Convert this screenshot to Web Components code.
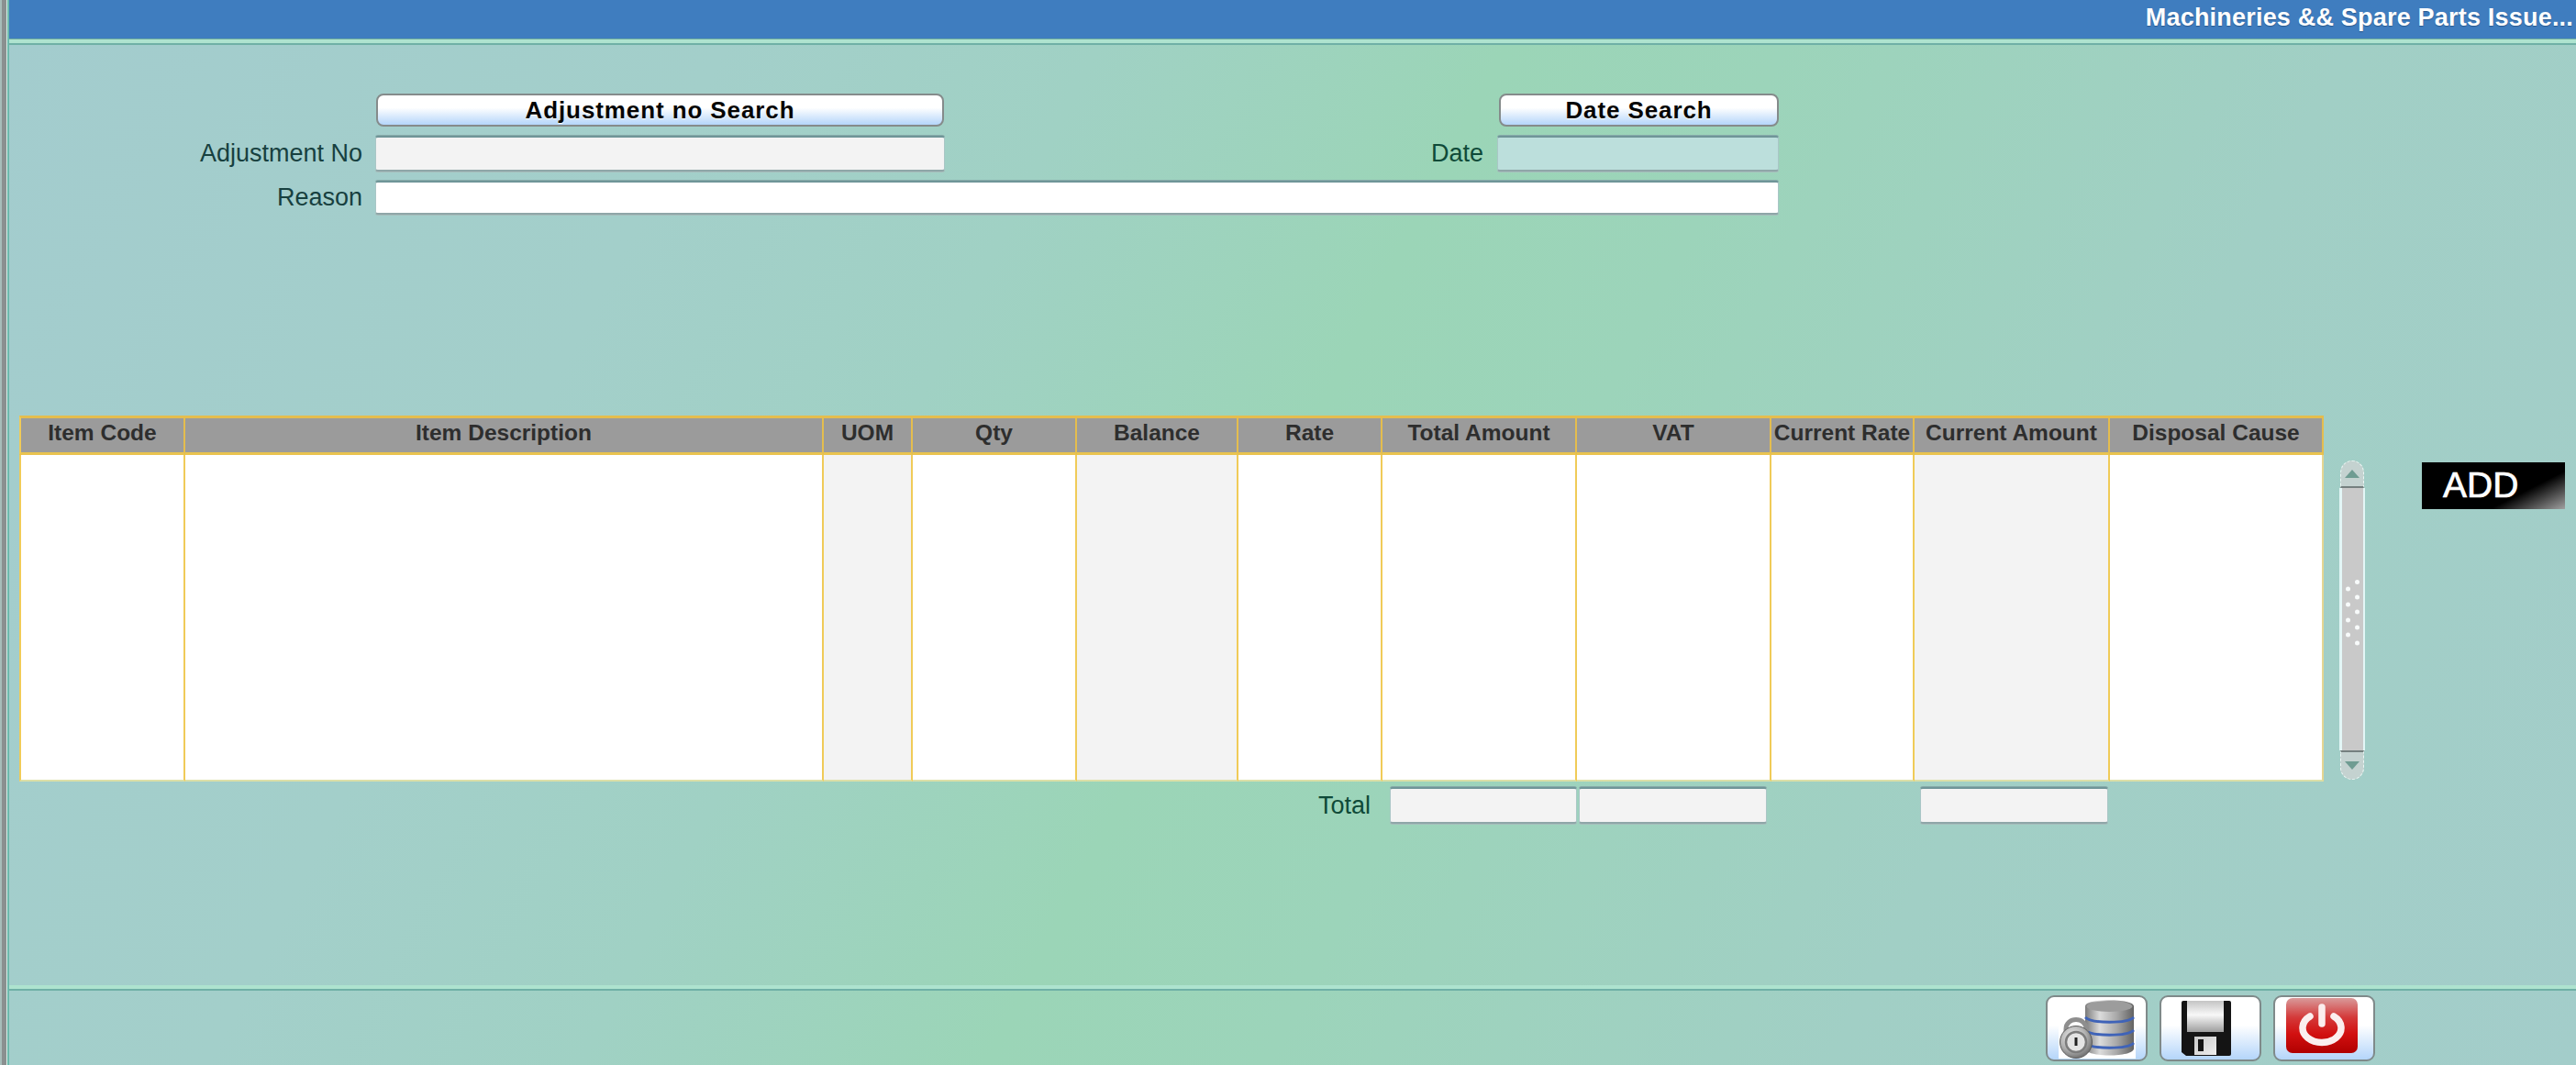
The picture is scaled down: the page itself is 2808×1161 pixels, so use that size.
<!DOCTYPE html>
<html>
<head>
<meta charset="utf-8">
<title>Machineries && Spare Parts Issue</title>
<style>
    html, body { margin: 0; padding: 0; height: 100%; overflow: hidden; }
    body { font-family: "Liberation Sans", Arial, sans-serif; }
</style>
</head>
<body>
<app-window>
    <title-bar slot="title">Machineries &amp;&amp; Spare Parts Issue...</title-bar>

    <search-form>
        <field-label slot="adj-label">Adjustment No</field-label>
        <search-button slot="adj-button">Adjustment no Search</search-button>
        <text-box slot="adj-box" kind="readonly"></text-box>
        <search-button slot="date-button">Date Search</search-button>
        <field-label slot="date-label" style="color:#0f4a38">Date</field-label>
        <text-box slot="date-box" kind="tint"></text-box>
        <field-label slot="reason-label">Reason</field-label>
        <text-box slot="reason-box"></text-box>
    </search-form>

    <grid-area>
        <data-grid slot="grid">
            <grid-col w="181">Item Code</grid-col>
            <grid-col w="696">Item Description</grid-col>
            <grid-col w="97" shaded>UOM</grid-col>
            <grid-col w="179">Qty</grid-col>
            <grid-col w="176" shaded>Balance</grid-col>
            <grid-col w="157">Rate</grid-col>
            <grid-col w="212">Total Amount</grid-col>
            <grid-col w="212">VAT</grid-col>
            <grid-col w="156">Current Rate</grid-col>
            <grid-col w="213" shaded>Current Amount</grid-col>
            <grid-col w="233" last>Disposal Cause</grid-col>
        </data-grid>
        <scroll-bar slot="scroll"></scroll-bar>
        <add-button slot="add">ADD</add-button>
    </grid-area>

    <total-row></total-row>

    <tool-bar slot="footer">
        <icon-button icon="db"></icon-button>
        <icon-button icon="save"></icon-button>
        <icon-button icon="power"></icon-button>
    </tool-bar>
</app-window>

<script>
class AppWindow extends HTMLElement {
    connectedCallback() {
        const shadow = this.attachShadow({ mode: 'open' });
        shadow.innerHTML = `
            <style>
                :host {
                    display: flex;
                    width: 2808px;
                    height: 1161px;
                    background: linear-gradient(117deg, #a3ccce 0%, #a3cfca 24%, #a0d1c4 36%, #9bd5b7 49%, #9cd4ba 58%, #a1cfc5 76%, #a3cdca 100%);
                    color: #17403f;
                    font-family: "Liberation Sans", Arial, sans-serif;
                }
                .edge {
                    flex: 0 0 10px;
                    box-sizing: border-box;
                    border-left: 2px solid #a7bdb9;
                    background: linear-gradient(90deg, #8a9090 0 5px, #d8efe8 5px 6px, #6cb9ac 6px);
                }
                .body {
                    flex: 1;
                    display: flex;
                    flex-direction: column;
                    min-width: 0;
                }
                .main { flex: 1; }
            </style>
            <div class="edge"></div>
            <div class="body">
                <slot name="title"></slot>
                <div class="main"><slot></slot></div>
                <slot name="footer"></slot>
            </div>
        `;
    }
}
customElements.define("app-window", AppWindow);

class TitleBar extends HTMLElement {
    connectedCallback() {
        const shadow = this.attachShadow({ mode: 'open' });
        shadow.innerHTML = `
            <style>
                :host {
                    display: block;
                    border-bottom: 2px solid #6fb0a6;
                }
                .bar {
                    height: 42px;
                    background: #3f7dbf;
                    color: #fff;
                    font-size: 27px;
                    font-weight: bold;
                    line-height: 38px;
                    text-align: right;
                    padding-right: 3px;
                    letter-spacing: 0.2px;
                    white-space: nowrap;
                    text-shadow: 0 1px 1px rgba(20,50,90,.5);
                }
                .line { height: 5px; background: linear-gradient(#6fae9f 0 1px, #aee3cf 1px); }
            </style>
            <div class="bar"><slot></slot></div>
            <div class="line"></div>
        `;
    }
}
customElements.define("title-bar", TitleBar);

class SearchForm extends HTMLElement {
    connectedCallback() {
        const shadow = this.attachShadow({ mode: 'open' });
        shadow.innerHTML = `
            <style>
                :host {
                    display: grid;
                    grid-template-columns: 399px 621px 602px 307px;
                    grid-template-rows: 36px 39px 37px;
                    row-gap: 10px;
                    padding-top: 53px;
                }
                .btn-a { grid-column: 2; grid-row: 1; padding: 0 1px; }
                .btn-d { grid-column: 4; grid-row: 1; padding-left: 2px; }
                .lab-a { grid-column: 1; grid-row: 2; }
                .box-a { grid-column: 2; grid-row: 2; }
                .lab-d { grid-column: 3; grid-row: 2; }
                .box-d { grid-column: 4; grid-row: 2; }
                .lab-r { grid-column: 1; grid-row: 3; }
                .box-r { grid-column: 2 / 5; grid-row: 3; }
                .lab-a, .lab-r { padding-right: 14px; }
                .lab-d { padding-right: 15px; }
            </style>
            <div class="btn-a"><slot name="adj-button"></slot></div>
            <div class="btn-d"><slot name="date-button"></slot></div>
            <div class="lab-a"><slot name="adj-label"></slot></div>
            <div class="box-a"><slot name="adj-box"></slot></div>
            <div class="lab-d"><slot name="date-label"></slot></div>
            <div class="box-d"><slot name="date-box"></slot></div>
            <div class="lab-r"><slot name="reason-label"></slot></div>
            <div class="box-r"><slot name="reason-box"></slot></div>
        `;
    }
}
customElements.define("search-form", SearchForm);

class FieldLabel extends HTMLElement {
    connectedCallback() {
        const shadow = this.attachShadow({ mode: 'open' });
        shadow.innerHTML = `
            <style>
                :host {
                    display: flex;
                    height: 100%;
                    align-items: center;
                    justify-content: flex-end;
                    font-size: 27px;
                    color: #17403f;
                    white-space: nowrap;
                }
            </style>
            <slot></slot>
        `;
    }
}
customElements.define("field-label", FieldLabel);

class SearchButton extends HTMLElement {
    connectedCallback() {
        const shadow = this.attachShadow({ mode: 'open' });
        shadow.innerHTML = `
            <style>
                :host {
                    display: flex;
                    box-sizing: border-box;
                    height: 100%;
                    align-items: center;
                    justify-content: center;
                    border: 2px solid #858b8b;
                    border-radius: 8px;
                    background: linear-gradient(#fff 0, #fff 42%, #b4d5fa 100%);
                    color: #050505;
                    font-size: 26px;
                    font-weight: bold;
                    letter-spacing: 0.9px;
                    white-space: nowrap;
                    text-shadow: 0 1px 0 #fff;
                }
            </style>
            <slot></slot>
        `;
    }
}
customElements.define("search-button", SearchButton);

class TextBox extends HTMLElement {
    connectedCallback() {
        const kinds = { readonly: '#f3f3f3', tint: '#bcdfdc' };
        const bg = kinds[this.getAttribute('kind')] || '#fff';
        const shadow = this.attachShadow({ mode: 'open' });
        shadow.innerHTML = `
            <style>
                :host {
                    display: block;
                    box-sizing: border-box;
                    height: 100%;
                    background: ${bg};
                    border: 1px solid #a9c6c6;
                    border-top: 2px solid #6f9598;
                    border-bottom: 2px solid #8fa6a8;
                    border-radius: 3px;
                    box-shadow: 0 -1px 0 #86aaa9, 0 1px 0 #a6bdbb;
                }
            </style>
        `;
    }
}
customElements.define("text-box", TextBox);

class GridArea extends HTMLElement {
    connectedCallback() {
        const shadow = this.attachShadow({ mode: 'open' });
        shadow.innerHTML = `
            <style>
                :host {
                    display: flex;
                    align-items: flex-start;
                    margin-top: 219px;
                    padding-left: 11px;
                }
                .scroll { margin: 49px 0 0 17px; }
                .add { margin: 51px 0 0 62px; }
            </style>
            <slot name="grid"></slot>
            <div class="scroll"><slot name="scroll"></slot></div>
            <div class="add"><slot name="add"></slot></div>
        `;
    }
}
customElements.define("grid-area", GridArea);

class DataGrid extends HTMLElement {
    connectedCallback() {
        const shadow = this.attachShadow({ mode: 'open' });
        shadow.innerHTML = `
            <style>
                :host {
                    display: flex;
                    width: 2512px;
                    height: 399px;
                }
            </style>
            <slot></slot>
        `;
    }
}
customElements.define("data-grid", DataGrid);

class GridCol extends HTMLElement {
    connectedCallback() {
        const w = this.getAttribute('w');
        const bg = this.hasAttribute('shaded') ? '#f3f3f3' : '#fff';
        const line = this.hasAttribute('last') ? '#e6d692' : '#f0cb58';
        const first = this.previousElementSibling ? 'none' : '2px solid #f0cb58';
        const shadow = this.attachShadow({ mode: 'open' });
        shadow.innerHTML = `
            <style>
                :host {
                    display: flex;
                    flex-direction: column;
                    flex: 0 0 ${w}px;
                    box-sizing: border-box;
                    min-width: 0;
                }
                .head {
                    box-sizing: border-box;
                    height: 43px;
                    padding-bottom: 3px;
                    background: #9b9b9b;
                    border-top: 3px solid #e4bd4e;
                    border-bottom: 3px solid #e9c34f;
                    border-left: ${first};
                    border-right: 2px solid #e4bd4e;
                    color: #2e2e2e;
                    font-size: 24.5px;
                    font-weight: bold;
                    text-align: center;
                    line-height: 32px;
                    white-space: nowrap;
                    overflow: hidden;
                }
                .cell {
                    flex: 1;
                    background: ${bg};
                    border-left: ${first};
                    border-right: 2px solid ${line};
                    border-bottom: 2px solid #dcdfa8;
                }
            </style>
            <div class="head"><slot></slot></div>
            <div class="cell"></div>
        `;
    }
}
customElements.define("grid-col", GridCol);

class ScrollBar extends HTMLElement {
    connectedCallback() {
        const shadow = this.attachShadow({ mode: 'open' });
        shadow.innerHTML = `
            <style>
                :host {
                    display: flex;
                    flex-direction: column;
                    width: 28px;
                    height: 348px;
                }
                .end {
                    box-sizing: border-box;
                    flex: 0 0 30px;
                    margin: 0 1px;
                    display: flex;
                    align-items: center;
                    justify-content: center;
                    background: #c4d2d0;
                    border: 1px dashed #eaf6f3;
                }
                .up { border-radius: 13px 13px 0 0; border-bottom: 2px solid #75807f; }
                .down { flex-basis: 32px; border-radius: 0 0 13px 13px; border-top: 2px solid #75807f; }
                .thumb {
                    flex: 1;
                    display: flex;
                    align-items: center;
                    justify-content: center;
                    background: #c9c9c9;
                    border-left: 3px solid #e3f6f6;
                    border-right: 2px solid #e3f6f6;
                }
                .thumb svg { margin-bottom: 15px; display: block; }
            </style>
            <div class="end up">
                <svg width="16" height="9" viewBox="0 0 16 9"><path d="M8 0 L16 9 L0 9 Z" fill="#6f9c92"/></svg>
            </div>
            <div class="thumb">
                <svg width="15" height="72" viewBox="0 0 15 72" fill="#f8fbfb">
                    <circle cx="2.5" cy="10" r="2.5"/><circle cx="2.5" cy="27" r="2.5"/><circle cx="2.5" cy="44" r="2.5"/><circle cx="2.5" cy="60" r="2.5"/>
                    <circle cx="12.5" cy="2.5" r="2.5"/><circle cx="12.5" cy="19" r="2.5"/><circle cx="12.5" cy="35" r="2.5"/><circle cx="12.5" cy="52" r="2.5"/><circle cx="12.5" cy="69" r="2.5"/>
                </svg>
            </div>
            <div class="end down">
                <svg width="16" height="9" viewBox="0 0 16 9"><path d="M0 0 L16 0 L8 9 Z" fill="#6f9c92"/></svg>
            </div>
        `;
    }
}
customElements.define("scroll-bar", ScrollBar);

class AddButton extends HTMLElement {
    connectedCallback() {
        const shadow = this.attachShadow({ mode: 'open' });
        shadow.innerHTML = `
            <style>
                :host {
                    display: block;
                    box-sizing: border-box;
                    width: 156px;
                    height: 51px;
                    padding-left: 23px;
                    background: linear-gradient(153deg, #000 0, #000 68%, #a0a0a0 100%);
                    color: #fff;
                    font-size: 39px;
                    line-height: 49px;
                    -webkit-text-stroke: 0.7px #fff;
                }
            </style>
            <slot></slot>
        `;
    }
}
customElements.define("add-button", AddButton);

class TotalRow extends HTMLElement {
    connectedCallback() {
        const shadow = this.attachShadow({ mode: 'open' });
        shadow.innerHTML = `
            <style>
                :host {
                    display: grid;
                    grid-template-columns: 1505px 204px 2px 205px 167px 205px;
                    grid-template-rows: 40px;
                    margin-top: 6px;
                }
                .label { padding-right: 21px; }
                field-label { color: #0f4a38; }
                .a { grid-column: 2; }
                .b { grid-column: 4; }
                .c { grid-column: 6; }
            </style>
            <div class="label"><field-label>Total</field-label></div>
            <div class="a"><text-box kind="readonly"></text-box></div>
            <div class="b"><text-box kind="readonly"></text-box></div>
            <div class="c"><text-box kind="readonly"></text-box></div>
        `;
    }
}
customElements.define("total-row", TotalRow);

class ToolBar extends HTMLElement {
    connectedCallback() {
        const shadow = this.attachShadow({ mode: 'open' });
        shadow.innerHTML = `
            <style>
                :host {
                    display: block;
                    height: 87px;
                    box-sizing: border-box;
                    border-top: 4px solid #aee3cf;
                }
                .row {
                    display: flex;
                    justify-content: flex-end;
                    gap: 13px;
                    border-top: 2px solid #6fb0a6;
                    padding: 5px 219px 0 0;
                }
            </style>
            <div class="row"><slot></slot></div>
        `;
    }
}
customElements.define("tool-bar", ToolBar);

const ICONS = {
    db: `<svg width="84" height="65" viewBox="0 0 84 65">
        <defs>
            <linearGradient id="m" x1="0" x2="1" y1="0" y2="0">
                <stop offset="0" stop-color="#7a7a7a"/><stop offset=".3" stop-color="#dcdcdc"/><stop offset=".65" stop-color="#a8a8a8"/><stop offset="1" stop-color="#626262"/>
            </linearGradient>
            <radialGradient id="l" cx=".4" cy=".35" r=".75">
                <stop offset="0" stop-color="#f0f0f0"/><stop offset=".55" stop-color="#b0b0b0"/><stop offset="1" stop-color="#5c5c5c"/>
            </radialGradient>
        </defs>
        <rect width="84" height="65" fill="#fff"/>
        <path d="M29 8 C29 -1 82 -1 82 8 L82 54 C82 64 29 64 29 54 Z" fill="url(#m)"/>
        <ellipse cx="55.5" cy="8" rx="25" ry="6" fill="#9c9c9c"/>
        <path d="M29 20 C36 27 75 27 82 20" fill="none" stroke="#3f63b8" stroke-width="3"/>
        <path d="M29 34 C36 41 75 41 82 34" fill="none" stroke="#3f63b8" stroke-width="3"/>
        <path d="M29 48 C36 55 75 55 82 48" fill="none" stroke="#3f63b8" stroke-width="3"/>
        <path d="M8 38 V33 C8 19 30 19 30 33 V38" fill="none" stroke="#8e8e8e" stroke-width="5"/>
        <circle cx="19" cy="47" r="17.5" fill="url(#l)" stroke="#5c5c5c" stroke-width="1"/>
        <circle cx="19" cy="47" r="11" fill="#e4e4e4" stroke="#7c7c7c" stroke-width="2.5"/>
        <rect x="17.5" y="42" width="3" height="9" fill="#222"/>
    </svg>`,
    save: `<svg width="54" height="60" viewBox="0 0 54 60" style="margin-right:9px">
        <defs>
            <linearGradient id="p" x1="0" x2="0" y1="0" y2="1">
                <stop offset="0" stop-color="#c4c4c4"/><stop offset=".45" stop-color="#f8f8f8"/><stop offset="1" stop-color="#9e9e9e"/>
            </linearGradient>
            <linearGradient id="q" x1="0" x2="1" y1="0" y2="1">
                <stop offset="0" stop-color="#c8c8c8"/><stop offset="1" stop-color="#efefef"/>
            </linearGradient>
        </defs>
        <path d="M2 0 H52 Q54 0 54 2 V58 Q54 60 52 60 H5 L0 56 V2 Q0 0 2 0 Z" fill="#141414"/>
        <rect x="6" y="0" width="40" height="34" fill="url(#p)"/>
        <rect x="14" y="39" width="24" height="20" fill="url(#q)"/>
        <rect x="18" y="42" width="6" height="13" fill="#141414"/>
    </svg>`,
    power: `<svg width="78" height="60" viewBox="0 0 78 60" style="margin:0 6px 6px 0">
        <defs>
            <linearGradient id="r" x1="0" x2="0" y1="0" y2="1">
                <stop offset="0" stop-color="#d99a9a"/><stop offset=".35" stop-color="#d43a3a"/><stop offset=".65" stop-color="#d21010"/><stop offset="1" stop-color="#b00000"/>
            </linearGradient>
        </defs>
        <rect width="78" height="60" rx="7" fill="url(#r)"/>
        <path d="M26 20 A21 16 0 1 0 52 20" fill="none" stroke="#fbeeee" stroke-width="7.5" stroke-linecap="round"/>
        <path d="M39 10 V28" fill="none" stroke="#fbeeee" stroke-width="7.5" stroke-linecap="round"/>
    </svg>`
};

class IconButton extends HTMLElement {
    connectedCallback() {
        const shadow = this.attachShadow({ mode: 'open' });
        shadow.innerHTML = `
            <style>
                :host {
                    display: flex;
                    box-sizing: border-box;
                    width: 111px;
                    height: 72px;
                    align-items: center;
                    justify-content: center;
                    border: 2px solid #7f8a8a;
                    border-radius: 9px;
                    background: linear-gradient(#fff 0, #fff 45%, #b4d5fa 100%);
                }
                svg { display: block; }
            </style>
            ${ICONS[this.getAttribute('icon')]}
        `;
    }
}
customElements.define("icon-button", IconButton);
</script>
</body>
</html>
